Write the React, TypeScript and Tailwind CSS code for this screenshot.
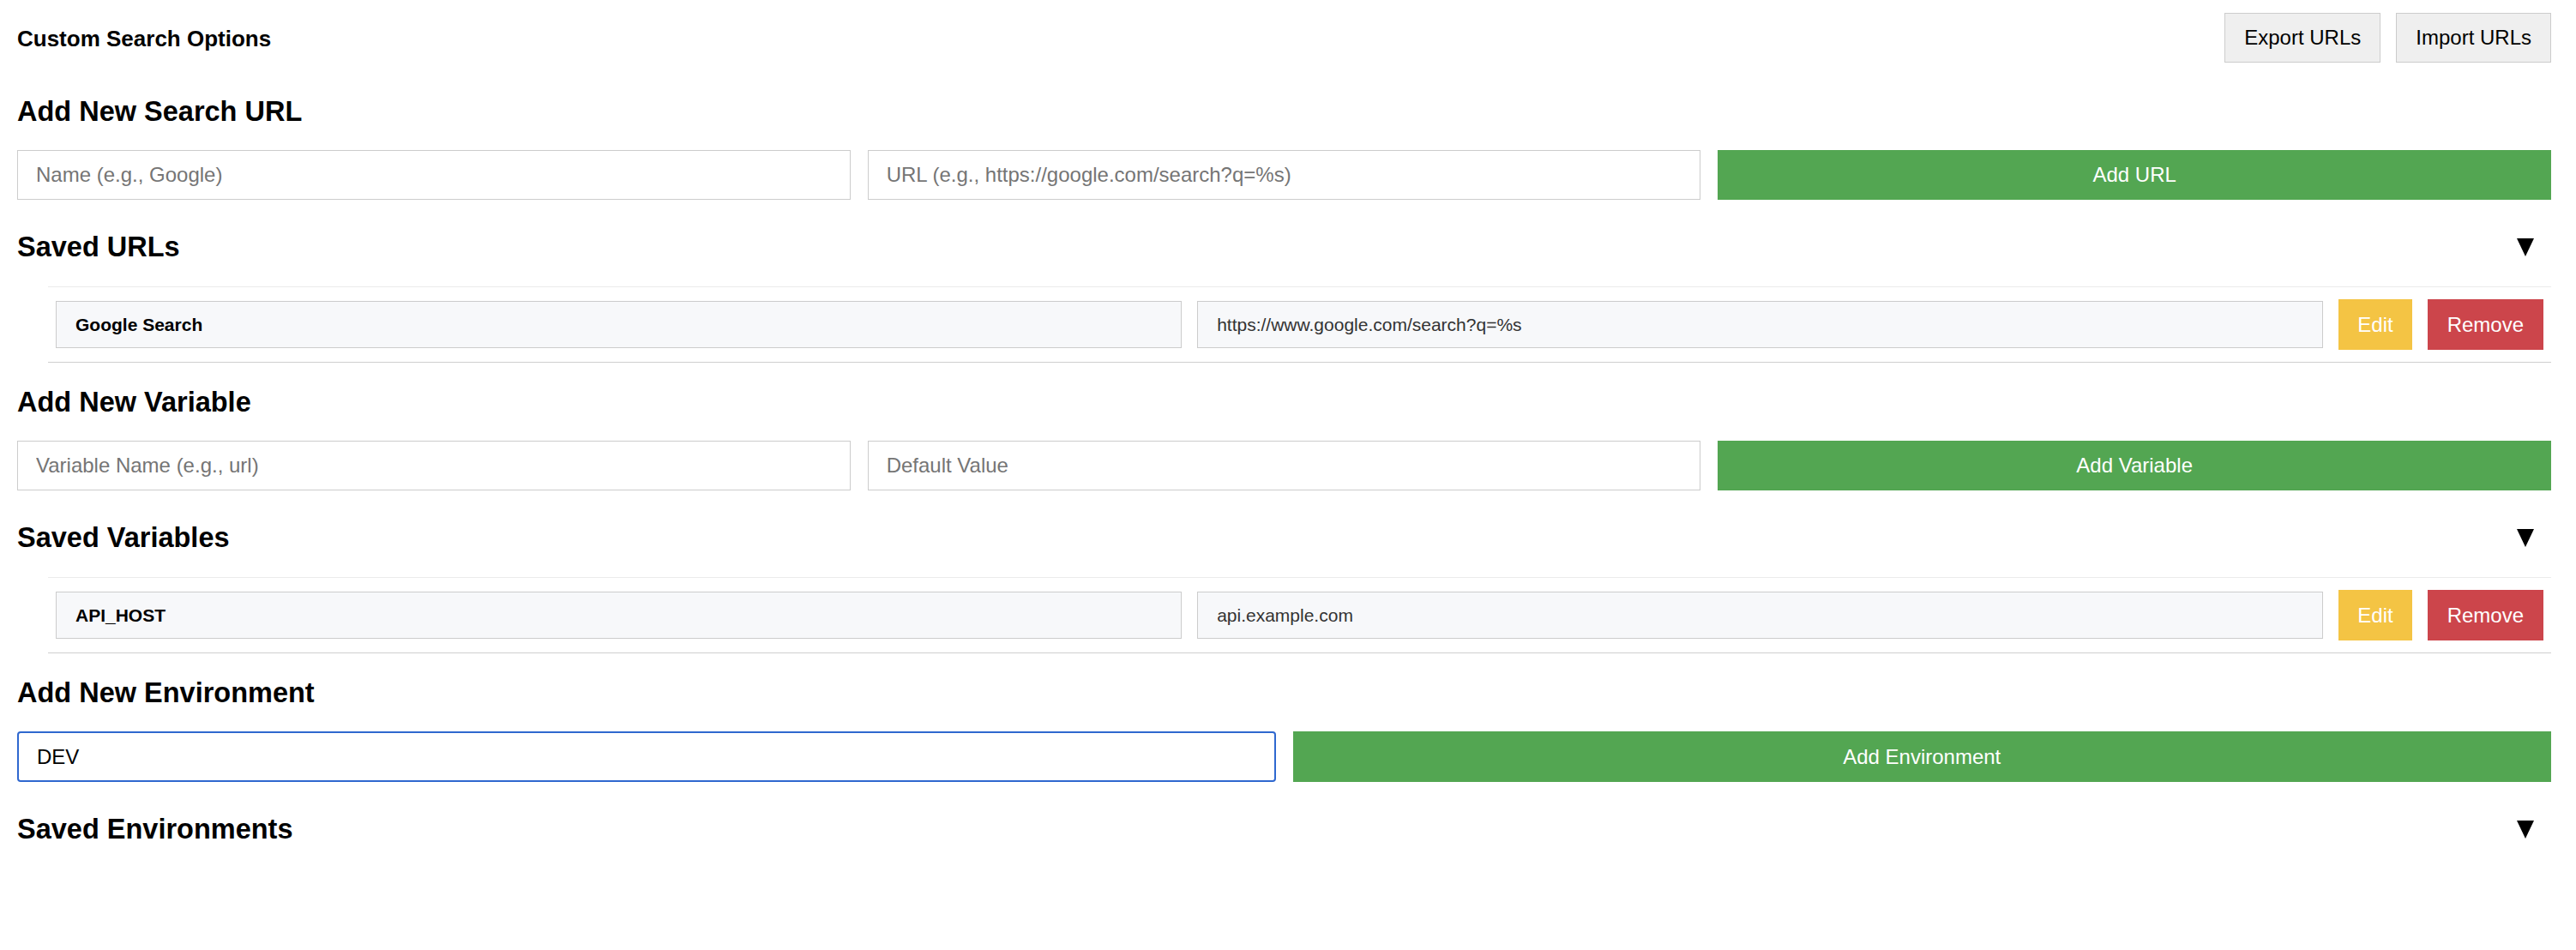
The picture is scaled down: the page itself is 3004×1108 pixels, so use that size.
import React from 'react';

type SavedItem = { name: string; value: string };

const sections: {
  addTitle: string;
  savedTitle: string;
  fields: string[];
  button: string;
  items: SavedItem[];
}[] = [
  {
    addTitle: 'Add New Search URL',
    savedTitle: 'Saved URLs',
    fields: ['Name (e.g., Google)', 'URL (e.g., https://google.com/search?q=%s)'],
    button: 'Add URL',
    items: [{ name: 'Google Search', value: 'https://www.google.com/search?q=%s' }],
  },
  {
    addTitle: 'Add New Variable',
    savedTitle: 'Saved Variables',
    fields: ['Variable Name (e.g., url)', 'Default Value'],
    button: 'Add Variable',
    items: [{ name: 'API_HOST', value: 'api.example.com' }],
  },
];

const Caret: React.FC = () => (
  <svg width="20" height="21" viewBox="0 0 20 21" className="mr-[20px]">
    <polygon points="0,0 20,0 10,21" fill="#000" />
  </svg>
);

const SavedHeader: React.FC<{ title: string }> = ({ title }) => (
  <div className="mt-[37px] flex h-[37px] items-center justify-between">
    <h2 className="text-[32.5px] font-bold leading-[37px] text-black">{title}</h2>
    <Caret />
  </div>
);

const SavedRow: React.FC<{ item: SavedItem }> = ({ item }) => (
  <ul className="ml-[36px] mt-[27px] border-t border-[#ebebeb]">
    <li className="flex items-center gap-[18px] border-b border-[#cfcfcf] px-[9px] py-[14px]">
      <input
        readOnly
        value={item.name}
        className="h-[55px] min-w-0 flex-1 border border-[#cccccc] bg-[#f7f8fa] px-[22px] text-[21px] font-bold text-black outline-none"
      />
      <input
        readOnly
        value={item.value}
        className="h-[55px] min-w-0 flex-1 border border-[#cccccc] bg-[#f7f8fa] px-[22px] text-[21px] text-[#333] outline-none"
      />
      <button className="h-[59px] bg-[#f4c444] px-[22px] text-[24px] text-white">Edit</button>
      <button className="h-[59px] bg-[#cc454b] px-[23px] text-[24px] text-white">Remove</button>
    </li>
  </ul>
);

const App: React.FC = () => {
  return (
    <div className="min-h-screen bg-white pl-[20px] pr-[29px] font-['Liberation_Sans',Arial,sans-serif] text-black">
      <div className="mt-[15px] flex h-[58px] items-center justify-between">
        <h1 className="pt-[2px] text-[26px] font-bold">Custom Search Options</h1>
        <div className="flex gap-[18px]">
          <button className="h-[58px] border border-[#cccccc] bg-[#efefef] px-[22px] text-[24px] text-black">
            Export URLs
          </button>
          <button className="h-[58px] border border-[#cccccc] bg-[#efefef] px-[22px] text-[24px] text-black">
            Import URLs
          </button>
        </div>
      </div>

      {sections.map((s, i) => (
        <section key={s.addTitle}>
          <h2 className={`${i === 0 ? 'mt-[39px]' : 'mt-[28px]'} text-[32.5px] font-bold leading-[37px]`}>
            {s.addTitle}
          </h2>
          <div className="mt-[26px] grid h-[58px] grid-cols-3 gap-[20px]">
            {s.fields.map((f) => (
              <input
                key={f}
                placeholder={f}
                className="h-[58px] w-full border border-[#cccccc] bg-white px-[21px] text-[24px] text-black outline-none placeholder:text-[#757575]"
              />
            ))}
            <button className="h-[58px] w-full bg-[#53a652] text-[24px] text-white">{s.button}</button>
          </div>
          <SavedHeader title={s.savedTitle} />
          {s.items.map((item) => (
            <SavedRow key={item.name} item={item} />
          ))}
        </section>
      ))}

      <section>
        <h2 className="mt-[28px] text-[32.5px] font-bold leading-[37px]">Add New Environment</h2>
        <div className="mt-[26px] grid h-[59px] grid-cols-2 gap-[20px]">
          <input
            defaultValue="DEV"
            className="h-[59px] w-full rounded-[4px] border-2 border-[#2f68cf] bg-white px-[21px] text-[24px] text-black outline-none"
          />
          <button className="h-[59px] w-full bg-[#53a652] text-[24px] text-white">Add Environment</button>
        </div>
        <SavedHeader title="Saved Environments" />
      </section>
    </div>
  );
};

export default App;
